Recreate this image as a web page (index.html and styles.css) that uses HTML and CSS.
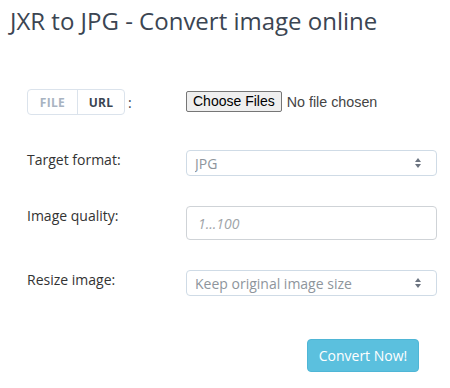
FILE: index.html
```html
<!DOCTYPE html>
<html>
<head>
<meta charset="utf-8">
<link rel="stylesheet" href="styles.css">
</head>
<body>
<div class="page">
  <h1 class="title">JXR to JPG - Convert image online</h1>
  <form class="form">
    <div class="row row-file">
      <div class="label-cell">
        <div class="toggle">
          <span class="seg seg-off">FILE</span><span class="seg seg-on">URL</span>
        </div>
        <span class="colon">:</span>
      </div>
      <div class="field-cell">
        <input class="file" type="file" multiple>
      </div>
    </div>
    <div class="row row-target">
      <label class="label">Target format:</label>
      <div class="select-wrap">
        <select class="select"><option>JPG</option></select>
        <svg class="arrows" width="8" height="12" viewBox="0 0 8 12"><path d="M4 1 L7 5 L1 5 Z M4 11 L7 7 L1 7 Z" fill="#6c7480"/></svg>
      </div>
    </div>
    <div class="row row-quality">
      <label class="label">Image quality:</label>
      <input class="input" type="text" placeholder="1...100">
    </div>
    <div class="row row-resize">
      <label class="label">Resize image:</label>
      <div class="select-wrap">
        <select class="select"><option>Keep original image size</option></select>
        <svg class="arrows" width="8" height="12" viewBox="0 0 8 12"><path d="M4 1 L7 5 L1 5 Z M4 11 L7 7 L1 7 Z" fill="#6c7480"/></svg>
      </div>
    </div>
    <div class="actions">
      <button type="button" class="btn">Convert Now!</button>
    </div>
  </form>
</div>
</body>
</html>
```
FILE: styles.css
```css
html, body {
  margin: 0;
  padding: 0;
  background: #fff;
}
body {
  font-family: "Open Sans", sans-serif;
  color: #333;
}
.page {
  padding: 0 10px;
}
.title {
  margin: 0;
  padding-top: 4px;
  font-size: 24px;
  font-weight: 400;
  line-height: 33px;
  color: #3b4552;
}
.form {
  margin-top: 52px;
  padding-left: 17px;
  padding-right: 13px;
}
.row {
  display: grid;
  grid-template-columns: 159px 1fr;
  align-items: start;
}
.row-file {
  height: 26px;
}
.label-cell {
  display: flex;
  align-items: center;
}
.toggle {
  display: flex;
  border: 1px solid #dbe3ec;
  border-radius: 4px;
  height: 24px;
}
.seg {
  display: flex;
  align-items: center;
  justify-content: center;
  font-size: 12px;
  font-weight: 700;
  letter-spacing: 0.3px;
}
.seg-off {
  width: 49px;
  color: #a8b3c1;
  border-right: 1px solid #dbe3ec;
}
.seg-on {
  width: 46px;
  color: #3b4552;
}
.colon {
  margin-left: 3px;
  font-size: 14px;
  color: #3b4552;
}
.file {
  font-family: "Liberation Sans", Arial, sans-serif;
  font-size: 14.3px;
  color: #444;
}
.file::file-selector-button {
  font-family: "Liberation Sans", Arial, sans-serif;
  font-size: 14px;
  height: 21px;
  padding: 0 6px;
  margin-right: 5px;
  background: #efefef;
  border: 1px solid #767676;
  border-radius: 2px;
  color: #000;
}
.label {
  font-size: 14px;
  color: #333;
  padding-top: 0;
  line-height: 19px;
}
.row-target {
  margin-top: 35px;
}
.row-quality {
  margin-top: 30px;
}
.row-resize {
  margin-top: 30px;
}
.select-wrap {
  position: relative;
}
.select {
  appearance: none;
  -webkit-appearance: none;
  width: 251px;
  height: 26px;
  margin: 0;
  padding: 0 8px;
  border: 1px solid #cfdbe6;
  border-radius: 4px;
  background: #fff;
  font-family: "Open Sans", sans-serif;
  font-size: 14px;
  color: #8e959c;
}
.arrows {
  position: absolute;
  right: 15px;
  top: 7px;
}
.input {
  box-sizing: border-box;
  width: 251px;
  height: 34px;
  margin: 0;
  padding: 0 11px;
  border: 1px solid #cfd3d7;
  border-radius: 4px;
  font-family: "Open Sans", sans-serif;
  font-size: 14px;
  font-style: italic;
}
.input::placeholder {
  color: #a0a4a8;
}
.actions {
  display: flex;
  justify-content: flex-end;
  margin-top: 43px;
  padding-right: 8px;
}
.btn {
  width: 112px;
  height: 33px;
  border: 1px solid #4fb6d6;
  border-radius: 4px;
  background: #5bc0de;
  color: #fff;
  font-family: "Open Sans", sans-serif;
  font-size: 14px;
  padding: 0;
}
```
